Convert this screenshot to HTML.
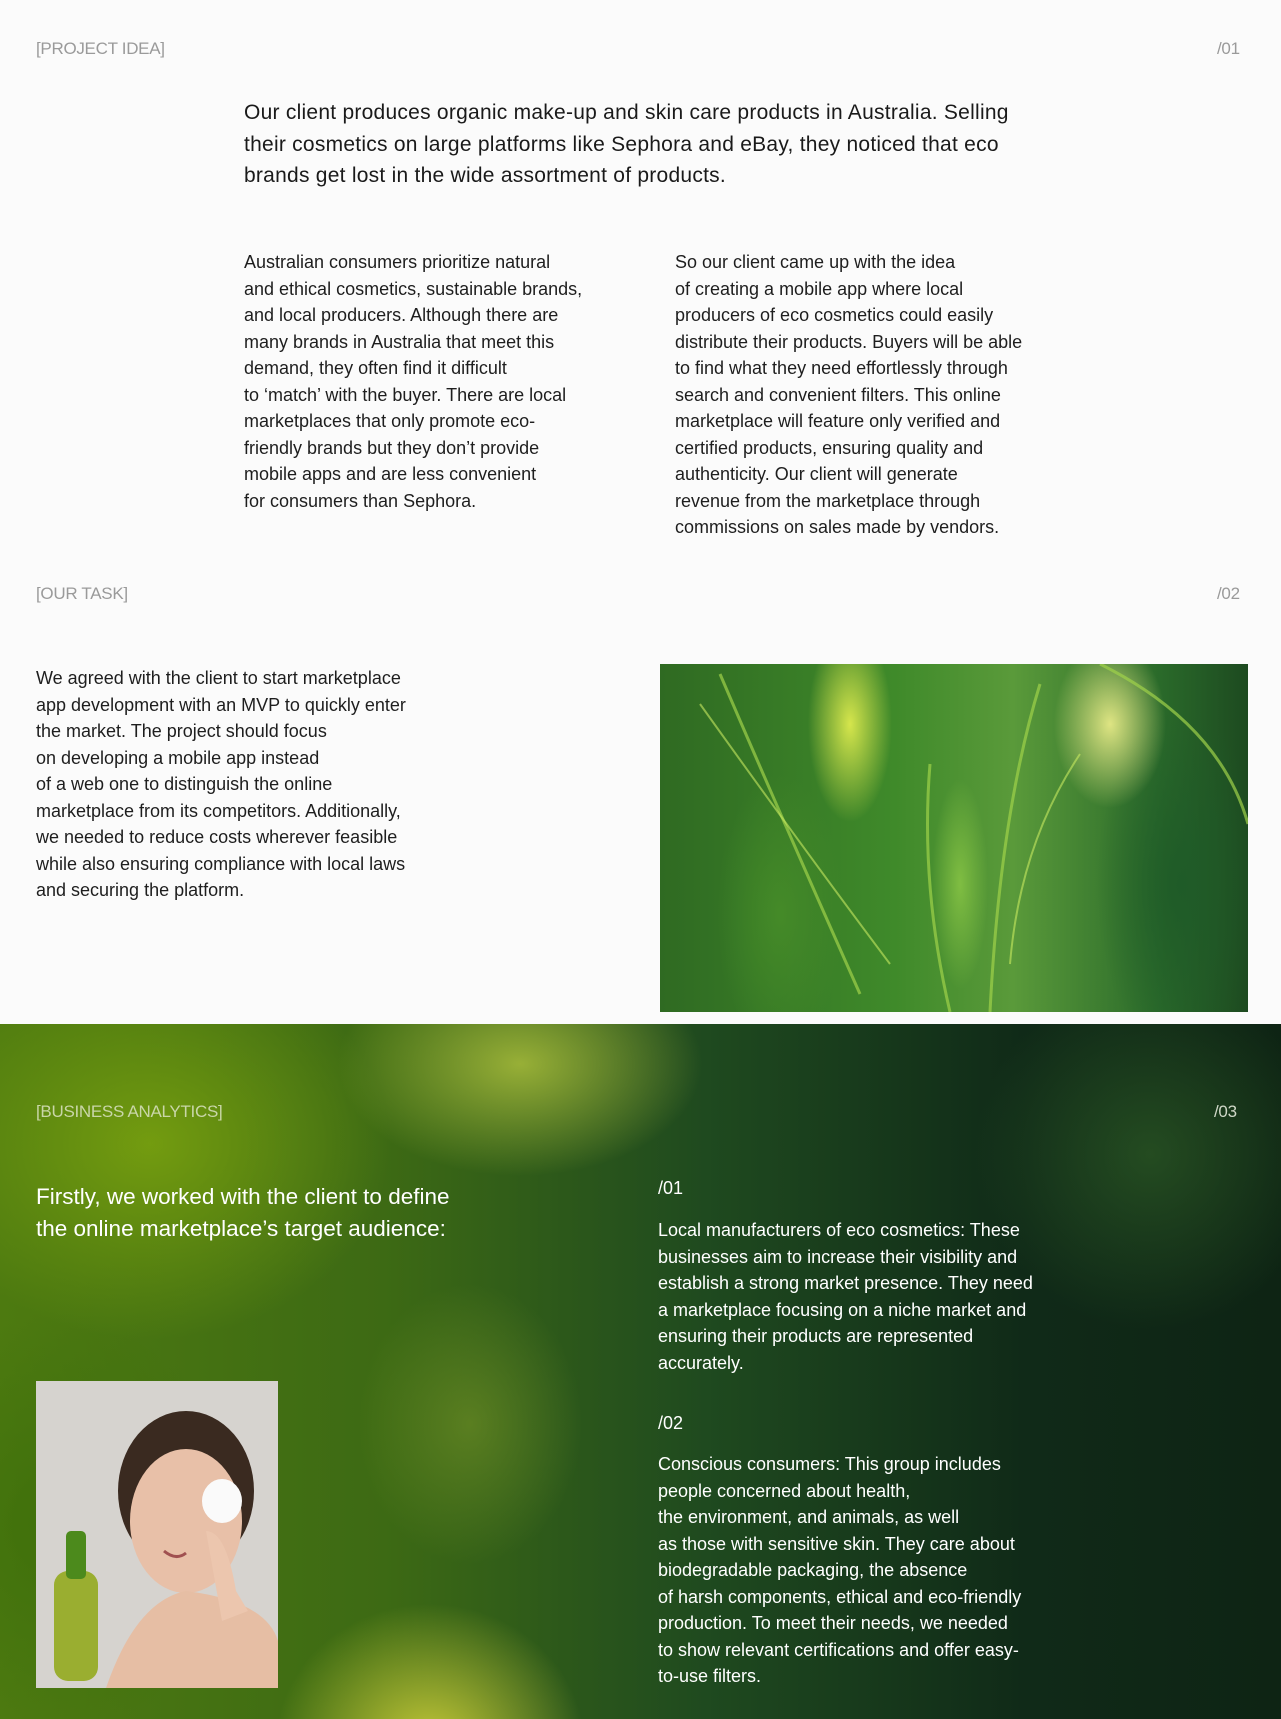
<!DOCTYPE html>
<html><head><meta charset="utf-8"><style>
*{margin:0;padding:0;box-sizing:border-box}
body{width:1281px;height:1719px;background:#fbfbfb;font-family:"Liberation Sans",sans-serif;position:relative;overflow:hidden;color:#1e1e1e}
.a{position:absolute;white-space:nowrap}
.lbl{font-size:17px;color:#9a9a9a;letter-spacing:-0.3px}
.lead{font-size:21px;line-height:31.5px;letter-spacing:0.25px;color:#1a1a1a}
.p{font-size:18px;line-height:26.5px;letter-spacing:0}
.green{position:absolute;left:0;top:1024px;width:1281px;height:695px;overflow:hidden;
background:
radial-gradient(ellipse 260px 160px at 520px 40px,rgba(170,190,60,.85),transparent 70%),
radial-gradient(ellipse 320px 260px at 150px 120px,rgba(120,160,15,.9),transparent 75%),
radial-gradient(ellipse 220px 200px at 430px 720px,rgba(210,210,60,.9),transparent 70%),
radial-gradient(ellipse 160px 200px at 470px 400px,rgba(120,150,40,.55),transparent 70%),
radial-gradient(ellipse 260px 300px at 60px 500px,rgba(60,110,10,.8),transparent 70%),
radial-gradient(ellipse 250px 250px at 1150px 130px,rgba(50,100,40,.6),transparent 70%),
linear-gradient(90deg,#4d7a10 0%,#3d6a14 30%,#1f4a1f 55%,#102a18 80%,#0e2414 100%)}
.w{color:#fff}
</style></head><body>
<div class="a lbl" style="left:36px;top:39px">[PROJECT IDEA]</div>
<div class="a lbl" style="left:1217px;top:39px">/01</div>
<div class="a lead" style="left:244px;top:97px">Our client produces organic make-up and skin care products in Australia. Selling<br>their cosmetics on large platforms like Sephora and eBay, they noticed that eco<br>brands get lost in the wide assortment of products.</div>
<div class="a p" style="left:244px;top:249px">Australian consumers prioritize natural<br>and ethical cosmetics, sustainable brands,<br>and local producers. Although there are<br>many brands in Australia that meet this<br>demand, they often find it difficult<br>to ‘match’ with the buyer. There are local<br>marketplaces that only promote eco-<br>friendly brands but they don’t provide<br>mobile apps and are less convenient<br>for consumers than Sephora.</div>
<div class="a p" style="left:675px;top:249px">So our client came up with the idea<br>of creating a mobile app where local<br>producers of eco cosmetics could easily<br>distribute their products. Buyers will be able<br>to find what they need effortlessly through<br>search and convenient filters. This online<br>marketplace will feature only verified and<br>certified products, ensuring quality and<br>authenticity. Our client will generate<br>revenue from the marketplace through<br>commissions on sales made by vendors.</div>

<div class="a lbl" style="left:36px;top:584px">[OUR TASK]</div>
<div class="a lbl" style="left:1217px;top:584px">/02</div>
<div class="a p" style="left:36px;top:665px">We agreed with the client to start marketplace<br>app development with an MVP to quickly enter<br>the market. The project should focus<br>on developing a mobile app instead<br>of a web one to distinguish the online<br>marketplace from its competitors. Additionally,<br>we needed to reduce costs wherever feasible<br>while also ensuring compliance with local laws<br>and securing the platform.</div>
<div class="a" style="left:660px;top:664px;width:588px;height:348px;overflow:hidden;background:
radial-gradient(ellipse 60px 140px at 190px 60px,rgba(230,240,80,.9),transparent 70%),
radial-gradient(ellipse 80px 120px at 450px 60px,rgba(240,240,140,.9),transparent 70%),
radial-gradient(ellipse 40px 150px at 300px 220px,rgba(140,200,70,.8),transparent 70%),
radial-gradient(ellipse 90px 200px at 120px 250px,rgba(70,140,40,.9),transparent 70%),
radial-gradient(ellipse 120px 250px at 520px 220px,rgba(30,90,40,.9),transparent 70%),
linear-gradient(90deg,#2f6a22,#3f8a2a 40%,#5a9a3a 60%,#2a6a2a 85%,#1d4a20)">
<svg width="588" height="348" style="position:absolute;left:0;top:0"><g stroke="#9fd24a" stroke-width="3" fill="none" opacity=".7"><path d="M60 10 Q120 150 200 330"/><path d="M380 20 Q340 150 330 348"/><path d="M270 100 Q260 220 290 348"/><path d="M440 0 Q560 60 588 160"/></g><g stroke="#c8ea60" stroke-width="2" fill="none" opacity=".6"><path d="M40 40 Q140 180 230 300"/><path d="M420 90 Q360 180 350 300"/></g></svg>
</div>

<div class="green">
<div class="a lbl" style="left:36px;top:78px;color:#c9d6a8">[BUSINESS ANALYTICS]</div>
<div class="a lbl" style="left:1214px;top:78px;color:#d0d8c8">/03</div>
<div class="a w" style="left:36px;top:157px;font-size:22.5px;line-height:32px">Firstly, we worked with the client to define<br>the online marketplace’s target audience:</div>
<div class="a" style="left:36px;top:357px;width:242px;height:307px;overflow:hidden;background:#d6d3cf">
<svg width="242" height="307"><ellipse cx="150" cy="110" rx="68" ry="80" fill="#3a2a20"/><ellipse cx="150" cy="140" rx="56" ry="72" fill="#e8c0a8"/><path d="M70 307 Q100 220 150 210 Q230 220 242 260 L242 307Z" fill="#e6bea4"/><ellipse cx="186" cy="120" rx="20" ry="22" fill="#fafafa"/><path d="M170 150 Q190 150 200 210 L212 230 L186 240 Z" fill="#ecc6ae"/><rect x="18" y="190" width="44" height="110" rx="14" fill="#9aae30"/><rect x="30" y="150" width="20" height="48" rx="5" fill="#4c8a1c"/><path d="M128 170 Q140 180 150 172" stroke="#a05050" stroke-width="3" fill="none"/></svg>
</div>
<div class="a w" style="left:658px;top:154px;font-size:18px">/01</div>
<div class="a p w" style="left:658px;top:193px">Local manufacturers of eco cosmetics: These<br>businesses aim to increase their visibility and<br>establish a strong market presence. They need<br>a marketplace focusing on a niche market and<br>ensuring their products are represented<br>accurately.</div>
<div class="a w" style="left:658px;top:389px;font-size:18px">/02</div>
<div class="a p w" style="left:658px;top:427px">Conscious consumers: This group includes<br>people concerned about health,<br>the environment, and animals, as well<br>as those with sensitive skin. They care about<br>biodegradable packaging, the absence<br>of harsh components, ethical and eco-friendly<br>production. To meet their needs, we needed<br>to show relevant certifications and offer easy-<br>to-use filters.</div>
</div>
</body></html>
